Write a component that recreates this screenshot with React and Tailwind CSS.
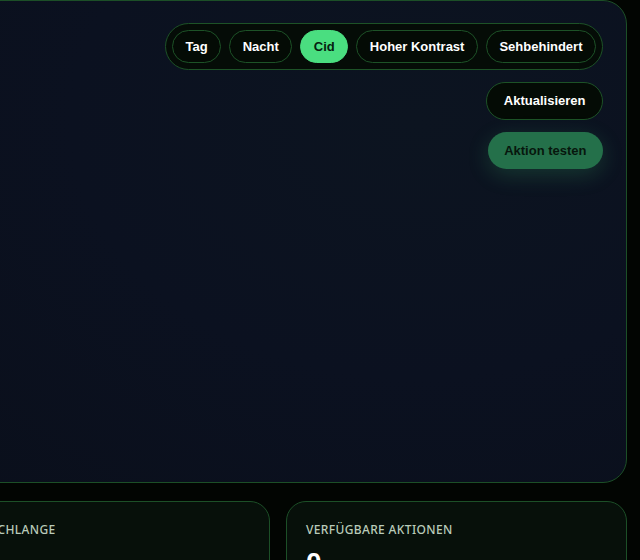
import { useState } from "react";

const MODES = ["Tag", "Nacht", "Cid", "Hoher Kontrast", "Sehbehindert"];

export default function App() {
  const [mode, setMode] = useState("Cid");

  return (
    <div className="w-[640px] h-[560px] overflow-hidden bg-[#020502] font-['Liberation_Sans',Arial,sans-serif]">
      <div className="ml-[-71px] w-[698px] flex flex-col gap-[18px]">
        {/* Main stage */}
        <section className="h-[483px] rounded-b-[24px] rounded-tr-[24px] border border-[#1c4f27] bg-[radial-gradient(ellipse_at_70%_25%,#0c1420_0%,#0b1120_50%,#0a0f1b_100%)] pt-[22px] pr-[23px]">
          <div className="flex flex-col items-end gap-3">
            <div className="flex items-center gap-2 rounded-full border border-[#1d5227] bg-[#050c07] p-[6px]">
              {MODES.map((m) => (
                <button
                  key={m}
                  type="button"
                  onClick={() => setMode(m)}
                  className={`h-[33px] px-[12.5px] rounded-full text-[13px] font-bold border ${
                    mode === m
                      ? "bg-[#4ade80] border-[#4ade80] text-[#06200f]"
                      : "bg-[#040b05] border-[#1d5227] text-white"
                  }`}
                >
                  {m}
                </button>
              ))}
            </div>
            <button
              type="button"
              className="h-[38px] px-[16.5px] rounded-full border border-[#1d5227] bg-[#040b05] text-white text-[13px] font-bold"
            >
              Aktualisieren
            </button>
            <button
              type="button"
              disabled
              className="h-[37px] px-[16.5px] rounded-full bg-[#24704a] text-[#07170d] text-[13px] font-bold shadow-[0_6px_22px_rgba(74,222,128,0.18)]"
            >
              Aktion testen
            </button>
          </div>
        </section>

        {/* Stats */}
        <div className="grid grid-cols-2 gap-4">
          {[
            { label: "Warteschlange", value: "0" },
            { label: "Verfügbare Aktionen", value: "0" },
          ].map((s) => (
            <div
              key={s.label}
              className="h-[120px] rounded-[20px] border border-[#1c4f27] bg-[#07100a] px-[19px] pt-[19px]"
            >
              <div className="font-['Noto_Sans',sans-serif] text-[12px] font-medium uppercase tracking-[0.03em] text-[#b9cbb9]">
                {s.label}
              </div>
              <div className="mt-[10px] text-[28px] font-bold leading-none text-white">{s.value}</div>
            </div>
          ))}
        </div>
      </div>
    </div>
  );
}
